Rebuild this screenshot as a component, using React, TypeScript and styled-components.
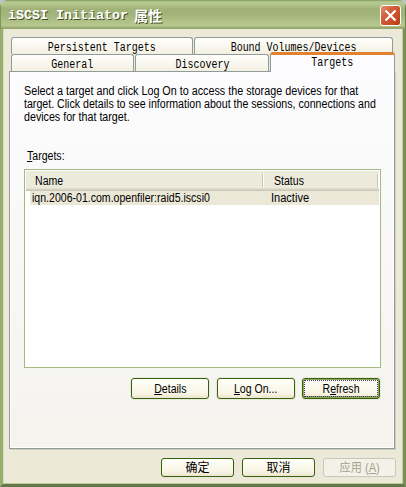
import React from "react";
import styled, { createGlobalStyle, css } from "styled-components";

const Global = createGlobalStyle`
  * { box-sizing: border-box; }
  body { margin: 0; overflow: hidden; background: #b9c4d2; }
`;

const ui = css`
  font-family: "Liberation Sans", "Noto Sans CJK SC", sans-serif;
  font-size: 12px;
  color: #000;
`;

const Window = styled.div`
  ${ui}
  width: 406px;
  height: 487px;
  display: flex;
  flex-direction: column;
  border-radius: 7px 7px 0 0;
  overflow: hidden;
  background: #ece9d8;
  white-space: nowrap;
`;

const TitleBar = styled.header`
  height: 29px;
  flex: none;
  display: flex;
  align-items: center;
  justify-content: space-between;
  padding: 2px 5px 0 8px;
  background: linear-gradient(#7f9b5c 0, #b9cb94 2px, #b4c68c 4px, #a1b279 9px, #a3b57b 15px, #b3c48b 23px, #b8c890 26px, #a0b178 27px, #8e9f67 29px);
  box-shadow: inset 1px 0 #7d9759, inset -1px 0 #66804a;
`;

const Title = styled.h1`
  margin: 0;
  padding-top: 1px;
  display: flex;
  align-items: center;
  gap: 6px;
  font: bold 13.33px/20px "Liberation Mono", monospace;
  color: #fff;
  text-shadow: 1px 1px #46501f;
`;

const TitleCjk = styled.span`
  font: bold 14px/18px "Noto Sans CJK SC", sans-serif;
  margin-top: -2px;
`;

const Close = styled.button`
  width: 21px;
  height: 21px;
  padding: 0;
  border: 1px solid #fff;
  border-radius: 3px;
  background: linear-gradient(135deg, #df9478 0, #d2603a 35%, #c64a23 75%, #a83c1c);
  display: grid;
  place-items: center;
`;

const Body = styled.main`
  flex: 1;
  display: flex;
  flex-direction: column;
  padding: 8px 7px 5px 6px;
  border: solid;
  border-width: 0 3px 3px;
  border-color: transparent #799158 #60784a #96ad70;
  box-shadow: inset 0 -1px #bccb8b, inset -1px 0 #c5d19c, inset 1px 0 #d9ddba;
`;

const TabRow = styled.div`
  display: flex;
  height: 17px;
  gap: 1px;
  padding: 0 2px;
`;

const Tab = styled.div<{ $w: number; $selected?: boolean }>`
  width: ${(p) => p.$w}px;
  height: 17px;
  flex: none;
  border: 1px solid #919b9c;
  border-bottom: 0;
  border-radius: 3px 3px 0 0;
  background: linear-gradient(#fffffc, #f3f0e2);
  font: 12px/20px "Liberation Mono", monospace;
  text-align: center;
  ${(p) =>
    p.$selected &&
    css`
      position: relative;
      z-index: 1;
      height: 20px;
      margin-top: -2px;
      border-top: 3px solid #e2812f;
      background: #fcfcfe;
      line-height: 17px;
    `}
`;

const TabText = styled.span`
  display: inline-block;
  transform: scaleX(0.833);
  margin: 0 -20px;
`;

const Narrow = styled.span<{ $fit?: number; $center?: boolean }>`
  display: inline-block;
  transform: scaleX(${(p) => p.$fit ?? 0.88});
  transform-origin: ${(p) => (p.$center ? "center" : "left")};
`;

const Panel = styled.section`
  width: 386px;
  height: 378px;
  flex: none;
  display: flex;
  flex-direction: column;
  border: 1px solid #919b9c;
  box-shadow: 1px 1px #d0cebf, inset -1px -1px #fff, inset 1px 0 #fff;
  background: linear-gradient(#fcfcfe, #f4f3ee);
  padding: 13px 14px 0 14px;
`;

const Line = styled.div`
  width: 357px;
  height: 13px;
  line-height: 13px;
`;

const ListLabel = styled.div`
  margin: 25px 0 5px 3px;
  line-height: 15px;
`;

const List = styled.div`
  width: 357px;
  height: 199px;
  flex: none;
  border: 1px solid #a4b97f;
  background: #fff;
  padding: 1px;
`;

const Header = styled.div`
  display: flex;
  height: 20px;
  padding-left: 9px;
  background: #ebeadb;
  border-bottom: 1px solid #cbc7b8;
  box-shadow: inset 0 -1px #d6d2c2, inset 0 -2px #e2decd;
  line-height: 21px;
`;

const HeadCell = styled.div<{ $w: number; $pad?: number }>`
  width: ${(p) => p.$w}px;
  padding-left: ${(p) => p.$pad ?? 0}px;
  background: linear-gradient(#c7c5b2, #c7c5b2) right 1px top 3px / 1px 13px no-repeat,
    linear-gradient(#fff, #fff) right 0 top 3px / 1px 13px no-repeat;
`;

const Row = styled.div`
  display: flex;
  height: 14px;
  margin-left: 4px;
  padding-left: 2px;
  background: #ebe8d8;
  line-height: 14px;
`;

const Cell = styled.div<{ $w: number }>`
  width: ${(p) => p.$w}px;
`;

const Actions = styled.div`
  display: flex;
  justify-content: flex-end;
  gap: 8px;
  margin-top: 10px;
`;

const Footer = styled.footer`
  display: flex;
  justify-content: flex-end;
  gap: 8px;
  margin-top: 9px;
`;

const Button = styled.button<{ $w: number; $h: number; $focus?: boolean }>`
  ${ui}
  width: ${(p) => p.$w}px;
  height: ${(p) => p.$h}px;
  padding: 0;
  border: 1px solid #37620a;
  border-radius: 3px;
  background: linear-gradient(#fffff8, #f8f5e5 75%, #ece4d0);
  box-shadow: 0 0 0 1px #e9e8dc;
  line-height: ${(p) => p.$h - 3}px;
  ${(p) =>
    p.$focus &&
    css`
      margin-left: -1px;
      box-shadow: inset 0 0 0 1px #8ba957, inset 0 -2px #8ba957, 0 0 0 1px #e9e8dc;
      outline: 1px dotted #51306b;
      outline-offset: -3px;
    `}
  &:disabled {
    color: #a3a18f;
    border-color: #cac7b9;
    background: #f4f2e8;
  }
`;

export default function App() {
  return (
    <>
      <Global />
      <Window>
        <TitleBar>
          <Title>
            <span>iSCSI Initiator</span>
            <TitleCjk>属性</TitleCjk>
          </Title>
          <Close aria-label="Close">
            <svg width="13" height="13" viewBox="0 0 13 13">
              <path d="M1.5 1.5L11.5 11.5M11.5 1.5L1.5 11.5" stroke="#fff" strokeWidth="2.2" />
            </svg>
          </Close>
        </TitleBar>
        <Body>
          <TabRow>
            <Tab $w={182}><TabText>Persistent Targets</TabText></Tab>
            <Tab $w={199}><TabText>Bound Volumes/Devices</TabText></Tab>
          </TabRow>
          <TabRow>
            <Tab $w={123}><TabText>General</TabText></Tab>
            <Tab $w={134}><TabText>Discovery</TabText></Tab>
            <Tab $w={125} $selected><TabText>Targets</TabText></Tab>
          </TabRow>
          <Panel>
            <Line><Narrow $fit={0.898}>Select a target and click Log On to access the storage devices for that</Narrow></Line>
            <Line><Narrow $fit={0.885}>target. Click details to see information about the sessions, connections and</Narrow></Line>
            <Line><Narrow $fit={0.89}>devices for that target.</Narrow></Line>
            <ListLabel><Narrow><u>T</u>argets:</Narrow></ListLabel>
            <List>
              <Header>
                <HeadCell $w={229}><Narrow>Name</Narrow></HeadCell>
                <HeadCell $w={115} $pad={10}><Narrow>Status</Narrow></HeadCell>
              </Header>
              <Row>
                <Cell $w={239}><Narrow>iqn.2006-01.com.openfiler:raid5.iscsi0</Narrow></Cell>
                <Cell $w={100}><Narrow $fit={0.92}>Inactive</Narrow></Cell>
              </Row>
            </List>
            <Actions>
              <Button $w={78} $h={21}><Narrow $center><u>D</u>etails</Narrow></Button>
              <Button $w={78} $h={21}><Narrow $center><u>L</u>og On...</Narrow></Button>
              <Button $w={78} $h={21} $focus><Narrow $center>R<u>e</u>fresh</Narrow></Button>
            </Actions>
          </Panel>
          <Footer>
            <Button $w={73} $h={19}>确定</Button>
            <Button $w={73} $h={19}>取消</Button>
            <Button $w={73} $h={19} disabled><Narrow $fit={0.93} $center>应用 (<u>A</u>)</Narrow></Button>
          </Footer>
        </Body>
      </Window>
    </>
  );
}
